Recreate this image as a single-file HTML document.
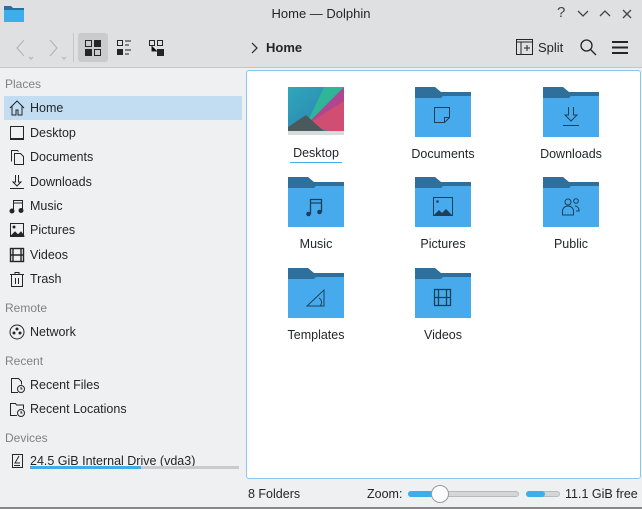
<!DOCTYPE html>
<html><head><meta charset="utf-8"><style>
*{margin:0;padding:0;box-sizing:border-box}
body{width:642px;height:509px;overflow:hidden;background:#eff0f1;font-family:"Liberation Sans","DejaVu Sans",sans-serif;font-size:12.5px;color:#232629;position:relative}
.abs{position:absolute}
#title{left:0;top:0;width:642px;height:28px;background:#dee0e2}
#tool{left:0;top:28px;width:642px;height:40px;background:#dee0e2;border-bottom:1px solid #c4c6c9}
#side{left:0;top:70px;width:246px;height:439px}
.sh{position:absolute;left:5px;color:#7f8285;font-size:12px}
.it{position:absolute;left:4px;width:238px;height:24px;line-height:24px;padding-left:26px}
.it svg{position:absolute;left:5px;top:4px}
.sel{background:#c2ddf2}
#view{left:246px;top:70px;width:395px;height:409px;background:#fff;border:1px solid #8ac7ee;border-radius:3px}
.f{position:absolute;width:120px;text-align:center}
.f svg{display:block;margin:0 auto}
.f span{display:block;margin-top:10px}
#status{left:0;top:480px;width:642px;height:29px}
</style></head><body>
<div id="title" class="abs">
<svg class="abs" style="left:4px;top:5px" width="20" height="17"><path d="M0 1h7l2 2h11v14H0z" fill="#2a6fa3"/><path d="M0 5h20v12H0z" fill="#3daee9"/></svg>
<div class="abs" style="left:0;width:642px;top:6px;text-align:center;font-size:13px">Home — Dolphin</div>
<div class="abs" style="left:557px;top:4px;font-size:15px;color:#444">?</div>
<svg class="abs" style="left:576px;top:8px" width="60" height="12" fill="none" stroke="#444" stroke-width="1.3"><path d="M2 3l5 5 5-5M24 8l5-5 5 5M47 2l8 8M55 2l-8 8"/></svg>
</div>
<div id="tool" class="abs">
<svg class="abs" style="left:14px;top:10px" width="60" height="24" fill="none" stroke="#b4b6b8" stroke-width="1.2"><path d="M10 2L3 10l7 8M36 2l7 8-7 8M15 19l2 2 2-2M48 19l2 2 2-2"/></svg>
<div class="abs" style="left:73px;top:5px;width:1px;height:29px;background:#c4c6c9"></div>
<div class="abs" style="left:78px;top:5px;width:30px;height:29px;background:#c9cbcd;border-radius:3px"></div>
<svg class="abs" style="left:85px;top:12px" width="18" height="16"><rect x=".5" y=".5" width="6" height="6" fill="none" stroke="#232629"/><rect x="9" y="0" width="7" height="7" fill="#232629"/><rect x="0" y="9" width="7" height="7" fill="#232629"/><rect x="9.5" y="9.5" width="6" height="6" fill="none" stroke="#232629"/></svg>
<svg class="abs" style="left:117px;top:12px" width="18" height="16" stroke="#232629"><rect x=".5" y=".5" width="5" height="5" fill="none"/><rect x="0" y="9" width="6" height="6" fill="#232629" stroke="none"/><path d="M8 1h6M8 5h4M8 10h6M8 14h4"/></svg>
<svg class="abs" style="left:149px;top:12px" width="18" height="16" stroke="#232629"><rect x=".5" y=".5" width="5" height="5" fill="none"/><rect x="8.5" y=".5" width="5" height="5" fill="none"/><path d="M3 6v5h5"/><rect x="8" y="9" width="7" height="7" fill="#232629" stroke="none"/></svg>
<svg class="abs" style="left:250px;top:14px" width="8" height="12" fill="none" stroke="#232629" stroke-width="1.2"><path d="M2 1l5 5-5 5"/></svg>
<div class="abs" style="left:266px;top:12px;font-weight:bold;font-size:13px">Home</div>
<svg class="abs" style="left:516px;top:11px" width="17" height="16" fill="none" stroke="#232629"><rect x=".5" y=".5" width="16" height="15"/><path d="M0 3h17M5 3v13M8 9h6M11 6v6" /></svg>
<div class="abs" style="left:538px;top:12px;font-size:13px">Split</div>
<svg class="abs" style="left:580px;top:11px" width="17" height="17" fill="none" stroke="#232629" stroke-width="1.3"><circle cx="6.5" cy="6.5" r="5.5"/><path d="M10.5 10.5l5.5 5.5"/></svg>
<svg class="abs" style="left:612px;top:13px" width="16" height="13" stroke="#232629" stroke-width="2"><path d="M0 1h16M0 6.5h16M0 12h16"/></svg>
</div>
<div id="side" class="abs">
<div class="sh" style="top:7px">Places</div>
<div class="it sel" style="top:26px"><svg width="16" height="16" fill="none" stroke="#232629"><path d="M1 8l7-7 7 7M3 6v9h4v-5h2v5h4V6"/></svg>Home</div>
<div class="it" style="top:51px"><svg width="16" height="16" fill="none" stroke="#232629"><rect x="1.5" y="1.5" width="13" height="12"/><path d="M1 14.5h14"/></svg>Desktop</div>
<div class="it" style="top:75px"><svg width="16" height="16" fill="none" stroke="#232629"><path d="M2.5 12.5v-11h6l1 1M5.5 15.5v-11h6l3 3v8z"/></svg>Documents</div>
<div class="it" style="top:100px"><svg width="16" height="16" fill="none" stroke="#232629"><path d="M6.5 1v7H4l4 4 4-4H9.5V1M1 14.5h14"/></svg>Downloads</div>
<div class="it" style="top:124px"><svg width="16" height="16" fill="#232629" stroke="#232629"><path d="M4.5 13V2.5h9V12M4.5 5h9" fill="none"/><circle cx="3" cy="13" r="2"/><circle cx="12" cy="12.5" r="2"/></svg>Music</div>
<div class="it" style="top:148px"><svg width="16" height="16" fill="none" stroke="#232629"><rect x="1.5" y="1.5" width="13" height="13"/><circle cx="5" cy="5" r="1" fill="#232629"/><path d="M2 14l4-4 3 3 3-3 3 4z" fill="#232629"/></svg>Pictures</div>
<div class="it" style="top:173px"><svg width="16" height="16" fill="none" stroke="#232629" stroke-width="1.4"><rect x="1.5" y="1.5" width="13" height="13"/><path d="M1 8h14M4 1v14M12 1v14"/></svg>Videos</div>
<div class="it" style="top:197px"><svg width="16" height="16" fill="none" stroke="#232629"><path d="M1 3.5h14M6 3V1.5h4V3M2.5 4v11.5h11V4M6.5 7v6M9.5 7v6"/></svg>Trash</div>
<div class="sh" style="top:231px">Remote</div>
<div class="it" style="top:250px"><svg width="16" height="16" fill="none" stroke="#232629"><circle cx="8" cy="8" r="7"/><circle cx="5" cy="9" r="1" fill="#232629"/><circle cx="8" cy="5" r="1" fill="#232629"/><circle cx="11" cy="9" r="1" fill="#232629"/></svg>Network</div>
<div class="sh" style="top:284px">Recent</div>
<div class="it" style="top:303px"><svg width="16" height="16" fill="none" stroke="#232629"><path d="M9 15.5H2.5v-14h7l3 3v3"/><circle cx="12" cy="12" r="3.5"/><path d="M12 10v2h1.5"/></svg>Recent Files</div>
<div class="it" style="top:327px"><svg width="16" height="16" fill="none" stroke="#232629"><path d="M8 14.5H1.5v-12h5l1 1.5h7v4"/><circle cx="12" cy="12" r="3.5"/><path d="M12 10v2h1.5"/></svg>Recent Locations</div>
<div class="sh" style="top:361px">Devices</div>
<div class="it" style="top:379px"><svg width="16" height="16" fill="none" stroke="#232629"><rect x="3.5" y="1.5" width="10" height="13"/><path d="M10 3l-4 7h5M5 12.5h6"/></svg>24.5 GiB Internal Drive (vda3)</div>
<div class="abs" style="left:30px;top:396px;width:209px;height:3px;background:#c9cbcd"></div>
<div class="abs" style="left:30px;top:396px;width:111px;height:3px;background:#3daee9"></div>
</div>
<div id="view" class="abs">
<div class="f" style="left:9px;top:16px"><svg width="56" height="48"><defs><linearGradient id="g" x1="0" y1="0" x2="1" y2="1"><stop offset="0" stop-color="#2fa8b8"/><stop offset="1" stop-color="#2a78b5"/></linearGradient></defs><rect width="56" height="48" fill="url(#g)"/><path d="M56 0L18 38 56 48z" fill="#b2458f"/><path d="M56 14L18 38l38 10z" fill="#cf4e72"/><path d="M56 0H36L18 38z" fill="#2fb598"/><path d="M0 48V40L18 28 40 48z" fill="#4a5a5c"/><rect y="44" width="56" height="4" fill="#d8dadc"/></svg><span style="margin-top:11px">Desktop</span><div style="width:52px;height:1px;background:#3daee9;margin:2px auto 0"></div></div>
<svg width="0" height="0" style="position:absolute"><defs><g id="fo"><path d="M0 0h20l6 5h30v10H0z" fill="#2e6f9c"/><path d="M0 11h26l2-2h28v41H0z" fill="#46aaec"/></g></defs></svg>
<div class="f" style="left:136px;top:16px"><svg width="56" height="50"><use href="#fo"/><path d="M19.5 20.5h15v10l-5 5h-10z M29.5 35.5v-5h5" fill="none" stroke="#1f3f58"/></svg><span>Documents</span></div>
<div class="f" style="left:264px;top:16px"><svg width="56" height="50"><use href="#fo"/><path d="M25.5 20v8H22l6 6 6-6h-3.5v-8M20 38.5h16" fill="none" stroke="#1f3f58"/></svg><span>Downloads</span></div>
<div class="f" style="left:9px;top:106px"><svg width="56" height="50"><use href="#fo"/><path d="M22.5 37V22.5h11V35M22.5 26h11" fill="none" stroke="#1f3f58" stroke-width="1.3"/><circle cx="20.5" cy="37" r="2.3" fill="#1f3f58"/><circle cx="31.5" cy="35" r="2.3" fill="#1f3f58"/></svg><span>Music</span></div>
<div class="f" style="left:136px;top:106px"><svg width="56" height="50"><use href="#fo"/><rect x="18.5" y="20.5" width="19" height="18" fill="none" stroke="#1f3f58"/><circle cx="22.5" cy="24.5" r="1.3" fill="#1f3f58"/><path d="M19 38l5-5 3 3 4-4 6 6z" fill="#1f3f58"/></svg><span>Pictures</span></div>
<div class="f" style="left:264px;top:106px"><svg width="56" height="50"><use href="#fo"/><g fill="none" stroke="#1f3f58"><circle cx="25" cy="25" r="3"/><circle cx="33" cy="24" r="2.3"/><path d="M19.5 38v-4a5.5 5 0 0 1 11 0v4zM32 29a4 4 0 0 1 4 4v1h-3"/></g></svg><span>Public</span></div>
<div class="f" style="left:9px;top:197px"><svg width="56" height="50"><use href="#fo"/><path d="M19 38h17V22zM31 30a5 5 0 0 1 1 8" fill="none" stroke="#1f3f58"/></svg><span>Templates</span></div>
<div class="f" style="left:136px;top:197px"><svg width="56" height="50"><use href="#fo"/><g fill="none" stroke="#1f3f58" stroke-width="1.3"><rect x="19.5" y="21.5" width="16" height="16"/><path d="M19 29.5h17M23.5 21v17M31.5 21v17"/></g></svg><span>Videos</span></div>
</div>
<div id="status" class="abs">
<div class="abs" style="left:248px;top:7px">8 Folders</div>
<div class="abs" style="left:367px;top:7px">Zoom:</div>
<div class="abs" style="left:408px;top:11px;width:111px;height:6px;border-radius:3px;background:#d4d6d8;border:1px solid #b8babc"></div>
<div class="abs" style="left:408px;top:11px;width:30px;height:6px;border-radius:3px;background:#3daee9"></div>
<div class="abs" style="left:431px;top:5px;width:18px;height:18px;border-radius:50%;background:#fcfcfc;border:1px solid #9a9c9e"></div>
<div class="abs" style="left:526px;top:11px;width:34px;height:6px;border-radius:3px;background:#d4d6d8;border:1px solid #b8babc"></div>
<div class="abs" style="left:526px;top:11px;width:19px;height:6px;border-radius:3px;background:#3daee9"></div>
<div class="abs" style="left:565px;top:7px">11.1 GiB free</div>
<div class="abs" style="left:0;top:27px;width:642px;height:2px;background:#888"></div>
</div>
</body></html>
